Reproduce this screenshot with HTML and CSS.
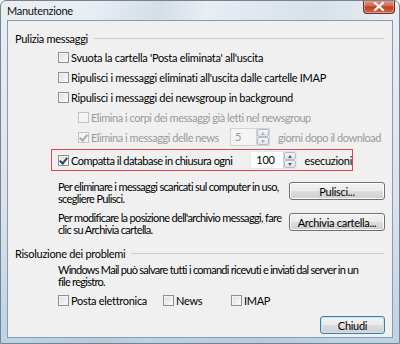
FILE: index.html
```html
<!DOCTYPE html>
<html lang="it">
<head>
  <meta charset="UTF-8" />
  <title>Manutenzione</title>
  <link rel="stylesheet" href="styles.css">
</head>
<body>

<div class="window">
  <div class="titlebar">
    <span class="title">Manutenzione</span>
    <div class="close-btn">
      <svg width="12" height="9" viewBox="0 0 12 9"><path d="M2 1 L10 8 M10 1 L2 8" stroke="#fff" stroke-width="2.2" stroke-linecap="square"/></svg>
    </div>
  </div>

  <div class="client">
    <div class="group-head group-first"><span>Pulizia messaggi</span><i class="rule"></i></div>

    <label class="row ind1"><span class="cb"></span>Svuota la cartella 'Posta eliminata' all'uscita</label>
    <label class="row ind1"><span class="cb"></span>Ripulisci i messaggi eliminati all'uscita dalle cartelle IMAP</label>
    <label class="row ind1"><span class="cb"></span>Ripulisci i messaggi dei newsgroup in background</label>
    <label class="row ind2 disabled"><span class="cb"></span>Elimina i corpi dei messaggi già letti nel newsgroup</label>
    <div class="row ind2 disabled">
      <span class="cb checked"></span>
      <span class="lbl-news">Elimina i messaggi delle news</span>
      <span class="spin spin-small"><span class="spin-val">5</span><span class="arrows"><b class="up"></b><b class="down"></b></span></span>
      <span class="after">giorni dopo il download</span>
    </div>

    <div class="highlight">
      <span class="cb checked"></span>
      <span class="lbl-compact">Compatta il database in chiusura ogni</span>
      <span class="spin spin-wide"><span class="spin-val right">100</span><span class="arrows"><b class="up"></b><b class="down"></b></span></span>
      <span class="after">esecuzioni</span>
    </div>

    <div class="action action-first">
      <p>Per eliminare i messaggi scaricati sul computer in uso,<br>scegliere Pulisci.</p>
      <button class="btn">Pulisci...</button>
    </div>
    <div class="action">
      <p>Per modificare la posizione dell'archivio messaggi, fare<br>clic su Archivia cartella.</p>
      <button class="btn">Archivia cartella...</button>
    </div>

    <div class="group-head group-second"><span>Risoluzione dei problemi</span><i class="rule"></i></div>
    <p class="info">Windows Mail può salvare tutti i comandi ricevuti e inviati dal server in un<br>file registro.</p>

    <div class="row ind1 logs">
      <label class="log-item log-mail"><span class="cb"></span>Posta elettronica</label>
      <label class="log-item log-news"><span class="cb"></span>News</label>
      <label class="log-item"><span class="cb"></span>IMAP</label>
    </div>

    <div class="footer">
      <button class="btn btn-default">Chiudi</button>
    </div>
  </div>
</div>

</body>
</html>
```

FILE: styles.css
```css
body {
  margin: 0;
  background: #fff;
  font-family: Lato, "DejaVu Sans", sans-serif;
  font-size: 11px;
  letter-spacing: -0.3px;
  color: #000;
}

.window {
  width: 400px;
  height: 344px;
  box-sizing: border-box;
  padding: 0 6px 5px 6px;
  border: 1px solid #77838f;
  border-radius: 6px 6px 0 0;
  overflow: hidden;
  background:
    linear-gradient(100deg, rgba(255,255,255,0) 20%, rgba(170,185,200,0.3) 35%, rgba(255,255,255,0) 45%, rgba(170,185,200,0.25) 70%, rgba(255,255,255,0) 85%),
    linear-gradient(to bottom, #e8eef4, #dae3ec 60%, #b9d3e6);
  display: flex;
  flex-direction: column;
}

.titlebar {
  height: 19px;
  display: flex;
  align-items: flex-start;
  justify-content: space-between;
  flex-shrink: 0;
}

.title {
  padding-top: 3px;
  font-size: 11px;
  color: #111;
}

.close-btn {
  width: 30px;
  height: 13px;
  margin-right: -2px;
  margin-top: -1px;
  border: 1px solid #6e3327;
  border-top: none;
  border-radius: 0 0 4px 4px;
  background: linear-gradient(to bottom, #e9a692, #d0654a 45%, #bb4124 55%, #d0694a);
  box-shadow: inset 0 0 0 1px rgba(255,220,210,0.45);
  display: flex;
  align-items: center;
  justify-content: center;
}

.client {
  flex: 1;
  background: #f0f0f0;
  border: 1px solid #8f9aa6;
  display: flex;
  flex-direction: column;
  padding: 0 7px 0 7px;
}

.group-head {
  height: 14px;
  display: flex;
  align-items: center;
  gap: 6px;
}

.group-first { margin-top: 10px; }
.group-second { margin-top: 10px; }

.rule {
  flex: 1;
  height: 1px;
  background: #c9cdd1;
  margin-right: 1px;
}

.row {
  height: 20px;
  display: flex;
  align-items: center;
  white-space: nowrap;
}

.ind1 { padding-left: 43px; }
.ind2 { padding-left: 63px; }

.group-first + .row { margin-top: 2px; }

.disabled {
  color: #9a9a9a;
  letter-spacing: -0.45px;
}

.cb {
  width: 9px;
  height: 9px;
  flex-shrink: 0;
  border: 1px solid #8e8f8f;
  background: linear-gradient(135deg, #dcdcdc, #fcfcfc);
  box-shadow: inset 0 0 0 1px #f4f4f4;
  margin-right: 2px;
  position: relative;
}

.disabled .cb {
  border-color: #c2c2c2;
  background: #f4f4f4;
}

.cb.checked::after {
  content: "";
  position: absolute;
  left: 2px;
  top: 0;
  width: 3px;
  height: 6px;
  border: solid #2a3f78;
  border-width: 0 2px 2px 0;
  transform: rotate(40deg);
}

.disabled .cb.checked::after { border-color: #a8a8a8; }

.lbl-news { width: 139px; }
.lbl-compact { width: 180px; letter-spacing: -0.5px; }

.spin {
  display: flex;
  flex-shrink: 0;
  height: 18px;
  box-sizing: border-box;
  border: 1px solid #c6c9cd;
  background: #fff;
  margin-right: 8px;
}

.disabled .spin { background: #f4f4f4; border-color: #cfd2d6; }

.spin-small { width: 40px; }
.spin-wide { width: 47px; border-color: #e8e8e8; }

.spin-val {
  flex: 1;
  padding-left: 4px;
  line-height: 16px;
}

.spin-val.right {
  text-align: right;
  padding-right: 8px;
}

.arrows {
  width: 12px;
  display: flex;
  flex-direction: column;
  border-left: 1px solid #cfd3d8;
}

.arrows b {
  flex: 1;
  border: 1px solid #b5bcc4;
  border-radius: 2px;
  background: linear-gradient(#f4f6f8, #dfe4ea);
  position: relative;
}

.arrows b::after {
  content: "";
  position: absolute;
  left: 3px;
  top: 2px;
  border-left: 2px solid transparent;
  border-right: 2px solid transparent;
}

.arrows .up::after { border-bottom: 3px solid #4c607a; }
.arrows .down::after { border-top: 3px solid #4c607a; }
.disabled .arrows .up::after { border-bottom-color: #aab2bc; }
.disabled .arrows .down::after { border-top-color: #aab2bc; }

.highlight {
  margin: 2px 32px 0 36px;
  height: 22px;
  box-sizing: border-box;
  border: 1px solid #e0474c;
  display: flex;
  align-items: center;
  padding-left: 6px;
  white-space: nowrap;
}

.action {
  display: flex;
  justify-content: space-between;
  align-items: flex-start;
  padding-left: 43px;
  margin-top: 7px;
}

.action-first { margin-top: 10px; }

.action p, .info {
  margin: 0;
  line-height: 12px;
  white-space: nowrap;
}

.action p { letter-spacing: -0.65px; }

.action .btn {
  margin-top: 1px;
  flex-shrink: 0;
}

.btn {
  width: 96px;
  height: 18px;
  padding: 0;
  font-family: inherit;
  font-size: 11px;
  letter-spacing: -0.3px;
  color: #000;
  border: 1px solid #707070;
  border-radius: 3px;
  background: linear-gradient(to bottom, #f2f2f2, #ebebeb 50%, #dddddd 51%, #cfcfcf);
  box-shadow: inset 0 0 0 1px #fcfcfc;
}

.info {
  padding-left: 43px;
  margin-top: 4px;
  letter-spacing: -0.72px;
}

.logs { margin-top: 2px; }

.log-item {
  display: flex;
  align-items: center;
}

.log-mail { width: 105px; }
.log-news { width: 68px; }

.footer {
  display: flex;
  justify-content: flex-end;
  margin-top: 6px;
}

.btn-default {
  width: 65px;
  height: 18px;
  border-color: #3c7fb1;
  box-shadow: inset 0 0 0 1px #c2e4f6;
}
```
